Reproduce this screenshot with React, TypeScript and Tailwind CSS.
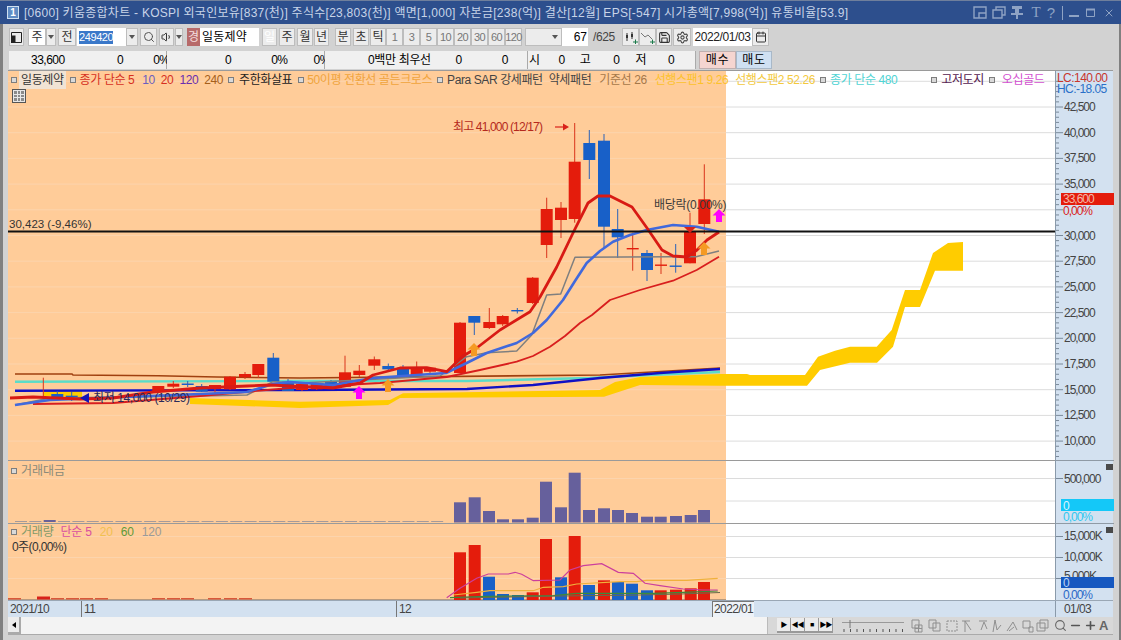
import React from "react";
import { Search, Volume1, Settings, Calendar, Save, Minus, Plus, X } from "lucide-react";

type Candle = [number, number, number, number, number, "r" | "b"];

// x, body top, body bottom, wick top, wick bottom
const candles: Candle[] = [
  [43.3, 397, 398, 377.7, 399, "r"],
  [57.3, 394, 398, 391, 399, "b"],
  [71.7, 395.7, 400, 392, 401, "b"],
  [158.3, 386, 391, 386, 392, "r"],
  [173.3, 383.7, 386.7, 381, 388, "r"],
  [187.7, 383.5, 385, 381, 387, "b"],
  [201.7, 386, 391.7, 384, 392, "b"],
  [215, 385, 389, 385, 394, "r"],
  [230, 376.7, 389.3, 376, 390, "r"],
  [245, 374, 377.3, 372, 379, "r"],
  [258.3, 364, 375, 364, 378, "r"],
  [273.3, 357.7, 381.7, 353, 382, "b"],
  [288, 381.7, 391, 379, 391, "b"],
  [302, 384, 390, 383, 391, "r"],
  [316.7, 384, 389.3, 383, 390, "r"],
  [331, 381.7, 386.7, 380, 388, "b"],
  [345, 372.3, 386.7, 355.7, 387, "r"],
  [359.3, 370.7, 375, 365, 377, "r"],
  [374.3, 359.3, 365.7, 356.5, 370, "r"],
  [388.3, 366, 369.3, 363.5, 370, "b"],
  [403, 367.7, 376, 365, 376, "b"],
  [416.7, 368, 375, 361.5, 375, "r"],
  [430, 367.7, 371.7, 367, 373, "r"],
  [460, 322.7, 373, 322, 373, "r"],
  [474.3, 316, 322.7, 316, 335, "b"],
  [489.3, 322, 328, 308, 329, "r"],
  [502.7, 316, 324.3, 315, 326, "r"],
  [517.3, 310, 311.4, 308, 313.5, "b"],
  [532.7, 277.7, 303, 277, 304, "r"],
  [546.7, 209, 245, 197.7, 258, "r"],
  [561, 207.7, 220, 202, 238, "r"],
  [574.7, 161.7, 219, 123, 222.7, "r"],
  [589.3, 143, 160, 130, 179, "b"],
  [604, 140.7, 226.7, 134, 248, "b"],
  [617.7, 229, 237.3, 209, 258, "b"],
  [632.7, 248, 249.4, 232.7, 270.7, "r"],
  [647, 253, 270, 250, 281, "b"],
  [661, 264.5, 265.9, 253, 274, "r"],
  [675.7, 265.5, 266.9, 244, 272.7, "b"],
  [690, 231.7, 263.3, 212.7, 263.3, "r"],
  [704.3, 199.3, 224, 164.3, 234, "r"],
];

const priceTicks = ["42,500", "40,000", "37,500", "35,000", "", "30,000", "27,500", "25,000", "22,500", "20,000", "17,500", "15,000", "12,500", "10,000"];
const priceY = (i: number) => 107 + i * 25.7;

const ma5 = "10,398 33,397 80,399 113,398 153,392 200,388 247,386 270,385 333,388 360,383 373,375 400,368 426.7,367.7 446.7,371.7 463,356 476.7,348 500,330 530,311.7 540,297 556.7,267 573,233 588,203 598,196 610,196 632,207 647,228 662,250 673,256 687,257 697,250 707,240 719,232";
const ma10 = "15,405 50,400 200,394 247,392 273,384 290,382 333,385 373,378 446,373 466.7,363 486.7,353 516.7,343 533,333 546.7,320 563,300 575,281 586.7,263 600,251 613,241.7 630,235 646.7,230 673,225 696.7,226.7 719,231.7";
const ma20 = "33,404 113,403 200,396 290,388 380,383 446.7,377 480,370 516.7,361.7 533,356 550,346.7 565,336 580,323 592,315 610,300 640,290 673,280.7 696.7,270 719,256.7";
const kijun = "15,405 50,398 200,396 247,395 273,381.7 300,383 440,376 466.7,356.7 486.7,352.7 516.7,351 531.7,335 546.7,295 560.7,294 575,257.3 673,256.7 696,256.7 719,251";
const ma240 = "15,374 72,374 73,375 158,375.7 217,377 300,378 600,375 720,368";
const ma480 = "15,381.7 300,381 467,381 590,378 650,375 720,372";
const ma120 = "15,390.7 300,390 467,389 533,385 600,378 660,373 720,369";
const cloud = "190,398 300,401.7 390,400 403,393.3 600,390 615,382 640,377 720,374 747,374 750,375 805,375 818,356.7 835,350.7 850,346.7 876.7,346.7 891.7,330 905,290 920,290 933,253 948,243 963,242 963,270.7 935,270.7 920,307 905,307 893,346.7 877,362.7 850,362.7 820,370 807,385.7 720,385.7 640,385 604,396.7 400,398 388,405 300,408 190,404";
const cloudLeft = "43,390 82,390 82,397 43,396";

const valueBars: [number, number][] = [
  [460, 502.3], [474.7, 497.3], [489, 511], [503, 519.3], [518, 519.3], [532.7, 517.7], [546, 481.7], [561, 507.3], [574.7, 472.7],
  [589, 510], [604, 508.3], [618, 510], [632, 513], [647, 516.7], [660.7, 516.7], [676, 516], [690.7, 515], [704, 510],
];
const volBars: [number, number, "r" | "b"][] = [
  [460, 552.3, "r"], [474.7, 545, "r"], [489, 576.7, "b"], [503, 594, "b"], [518, 595, "b"], [532.7, 592.3, "r"], [546, 539, "r"], [561, 577.3, "b"], [574.7, 536, "r"],
  [589, 585, "b"], [604, 580.3, "r"], [618, 582, "b"], [632, 583.7, "b"], [647, 590.3, "b"], [660.7, 590.3, "r"], [676, 589.7, "r"], [690.7, 588.3, "r"], [704, 582, "r"],
];

const volMa5 = [[80, 428], [120, 400], [170, 370], [205, 357], [265, 357], [285, 352], [305, 358], [340, 377], [420, 375], [450, 345], [490, 332], [545, 326], [595, 352], [640, 355], [675, 385], [720, 392], [790, 402], [850, 405], [893, 405]];
const volMa20 = [[100, 420], [170, 412], [210, 407], [340, 407], [370, 397], [430, 395], [470, 387], [600, 380], [650, 380], [680, 376], [800, 376], [893, 370]];
const volMa60 = [[90, 428], [200, 424], [400, 422], [470, 415], [700, 415], [790, 412], [893, 408]];
const volPts = (pts: number[][]) => pts.map(([x, y]) => `${(420 + x / 3).toFixed(1)},${(455 + y / 3).toFixed(1)}`).join(" ");

const Arrow = ({ x, y, up, color }: { x: number; y: number; up: boolean; color: string }) => (
  <polygon
    fill={color}
    points={up
      ? `${x},${y} ${x + 6.5},${y + 6.5} ${x + 3},${y + 6.5} ${x + 3},${y + 13} ${x - 3},${y + 13} ${x - 3},${y + 6.5} ${x - 6.5},${y + 6.5}`
      : `${x},${y} ${x + 6},${y - 6} ${x - 6},${y - 6}`}
  />
);

const Bullet = () => <span className="block w-[6px] h-[6px] border border-[#7d7d7d] bg-[#d9d9d9] shrink-0" />;

const Btn = ({ className = "", children }: { className?: string; children?: React.ReactNode }) => (
  <div className={`h-[18px] flex items-center justify-center bg-[#ececec] border border-[#bdbdbd] text-[#333] shrink-0 ${className}`}>
    {children}
  </div>
);

const Caret = () => <span className="w-0 h-0 border-x-[3px] border-x-transparent border-t-[4px] border-t-[#555]" />;

const MainChart = () => (
  <div className="relative h-[390px] shrink-0 bg-white border-b border-[#9a9a9a]">
    <div className="absolute left-0 top-0 bottom-0 w-[718px] bg-[#ffcc99]" />
    <svg className="absolute inset-0" width="1047" height="389" viewBox="8 71 1047 389">
      {[-1, 0, 1, 2, 3, 4, 5, 6, 7, 8, 9, 10, 11, 12, 13].map((i) => (
        <g key={i}>
          <line x1="8" x2="726" y1={priceY(i)} y2={priceY(i)} stroke="#fcd4ad" strokeWidth="1" />
          <line x1="726" x2="1055" y1={priceY(i)} y2={priceY(i)} stroke="#dcdcdc" strokeWidth="1" />
        </g>
      ))}
      <polygon points={cloud} fill="#ffcc00" />
      <polygon points={cloudLeft} fill="#ffcc00" />
      <polyline points={ma240} fill="none" stroke="#a0400f" strokeWidth="1.6" />
      <polyline points={ma480} fill="none" stroke="#5bdcc8" strokeWidth="2.4" />
      <polyline points={ma120} fill="none" stroke="#1111c4" strokeWidth="2.4" />
      {candles.map(([x, top, bottom, wt, wb, c]) => (
        <g key={x}>
          <line x1={x} x2={x} y1={wt} y2={wb} stroke={c === "r" ? "#d9341c" : "#2a62b8"} strokeWidth="1" />
          <rect x={x - 6} y={top} width="12" height={bottom - top} fill={c === "r" ? "#e41c0c" : "#1860c8"} />
        </g>
      ))}
      <polyline points={kijun} fill="none" stroke="#7f7f7f" strokeWidth="1.5" strokeLinejoin="round" />
      <polyline points={ma20} fill="none" stroke="#d81e1e" strokeWidth="1.8" strokeLinejoin="round" />
      <polyline points={ma10} fill="none" stroke="#4169dc" strokeWidth="2.6" strokeLinejoin="round" />
      <polyline points={ma5} fill="none" stroke="#d81a14" strokeWidth="2.8" strokeLinejoin="round" />
      <line x1="8" x2="1055" y1="231.5" y2="231.5" stroke="#111" strokeWidth="1.8" />
      <text x="9" y="228" fontSize="11.5" fill="#333">30,423 (-9,46%)</text>
      <text x="453" y="131" fontSize="12" fill="#b5291c" letterSpacing="-0.85">최고 41,000 (12/17)</text>
      <line x1="555" x2="566" y1="127" y2="127" stroke="#d8221a" strokeWidth="1.2" />
      <polygon points="569,127 563,123.5 563,130.5" fill="#d8221a" />
      <text x="654" y="209" fontSize="12" fill="#3a3a3a" letterSpacing="-0.3">배당락(0.00%)</text>
      <text x="93" y="402" fontSize="12" fill="#2a2a5a" letterSpacing="-0.4">최저 14,000 (10/29)</text>
      <polygon points="80,398 89,393 89,403" fill="#1414b8" />
      <Arrow x={690} y={233} up={false} color="#d8221a" />
      <Arrow x={719} y={209} up color="#ff00ff" />
      <Arrow x={704} y={242} up color="#f59a23" />
      <Arrow x={359} y={386} up color="#ff00ff" />
      <Arrow x={388} y={379} up color="#f59a23" />
      <Arrow x={474} y={343} up color="#f59a23" />
    </svg>
    {/* legend sits over the plot */}
    <div className="absolute left-0 top-[1px] flex items-center h-[15px] text-[12px] tracking-[-0.4px] whitespace-nowrap">
      <span className="ml-[3px]"><Bullet /></span>
      <span className="ml-[2px] px-[2px] bg-[#f1e3d4] text-[#333]">일동제약</span>
      <span className="ml-[4px]"><Bullet /></span>
      <span className="ml-[4px] text-[#d6301f]">종가 단순 5</span>
      <span className="ml-[8px] text-[#6a5fc0]">10</span>
      <span className="ml-[6px] text-[#d6301f]">20</span>
      <span className="ml-[6px] text-[#6a2fb0]">120</span>
      <span className="ml-[6px] text-[#a5601c]">240</span>
      <span className="ml-[5px]"><Bullet /></span>
      <span className="ml-[5px] text-[#222]">주한화살표</span>
      <span className="ml-[6px]"><Bullet /></span>
      <span className="ml-[3px] text-[#f0a43c]">50이평 전환선 골든크로스</span>
      <span className="ml-[5px]"><Bullet /></span>
      <span className="ml-[4px] text-[#444]">Para SAR 강세패턴</span>
      <span className="ml-[6px] text-[#444]">약세패턴</span>
      <span className="ml-[8px] text-[#a5784a]">기준선 26</span>
      <span className="ml-[8px] text-[#fcc22c]">선행스팬1 9.26</span>
      <span className="ml-[7px] text-[#f3c93c]">선행스팬2 52.26</span>
      <span className="ml-[5px]"><Bullet /></span>
      <span className="ml-[4px] text-[#4fd4d4]">종가 단순 480</span>
      <span className="ml-[34px]"><Bullet /></span>
      <span className="ml-[4px] text-[#55204f]">고저도지</span>
      <span className="ml-[5px]"><Bullet /></span>
      <span className="ml-[7px] text-[#d24fd0]">오십골드</span>
    </div>
    <div className="absolute left-[4px] top-[18px] w-[14px] h-[14px] bg-[#e7e7e7] border border-[#555] grid grid-cols-3 gap-px p-px">
      {Array.from({ length: 9 }).map((_, i) => <span key={i} className="bg-[#8a8a8a]" />)}
    </div>
  </div>
);

const ValueChart = () => (
  <div className="relative h-[63px] shrink-0 bg-white border-b border-[#9a9a9a]">
    <div className="absolute left-0 top-0 bottom-0 w-[718px] bg-[#ffcc99]" />
    <svg className="absolute inset-0" width="1047" height="62" viewBox="8 461 1047 62">
      <line x1="8" x2="726" y1="478.5" y2="478.5" stroke="#fcd4ad" />
      <line x1="726" x2="1055" y1="478.5" y2="478.5" stroke="#dcdcdc" />
      <line x1="726" x2="1055" y1="501" y2="501" stroke="#dcdcdc" />
      {Array.from({ length: 30 }).map((_, i) => (
        <rect key={i} x={15 + i * 14.35} y={i === 2 ? 520 : 521} width="12" height={i === 2 ? 2 : 1} fill={i === 2 ? "#6a6298" : "#a59a9a"} />
      ))}
      {valueBars.map(([x, top]) => <rect key={x} x={x - 6} y={top} width="12" height={522.5 - top} fill="#66609c" />)}
    </svg>
    <div className="absolute left-[3px] top-[1px] flex items-center gap-[4px] text-[12px] text-[#8a8a7a]">
      <Bullet />
      <span>거래대금</span>
    </div>
  </div>
);

const VolumeChart = () => (
  <div className="relative h-[76px] shrink-0 bg-white">
    <div className="absolute left-0 top-0 bottom-0 w-[718px] bg-[#ffcc99]" />
    <svg className="absolute inset-0" width="1047" height="76" viewBox="8 524 1047 76">
      {[536, 557, 578].map((y) => (
        <g key={y}>
          <line x1="8" x2="726" y1={y + 0.5} y2={y + 0.5} stroke="#fcd4ad" />
          <line x1="726" x2="1055" y1={y + 0.5} y2={y + 0.5} stroke="#dcdcdc" />
        </g>
      ))}
      <line x1="8" x2="726" y1="599.5" y2="599.5" stroke="#b89a7e" />
      {[8, 37, 51, 66, 80, 95, 152, 167, 181, 208, 224, 239].map((x, i) => (
        <rect key={x} x={x} y={i === 1 ? 596.5 : 598} width="13" height={i === 1 ? 3 : 1.5} fill={i === 1 ? "#d8221a" : "#d9583a"} />
      ))}
      {volBars.map(([x, top, c]) => <rect key={x} x={x - 6} y={top} width="12" height={600 - top} fill={c === "r" ? "#e41c0c" : "#1860c8"} />)}
      <polyline points={volPts(volMa20)} fill="none" stroke="#f0b13c" strokeWidth="1.2" />
      <polyline points={volPts(volMa60)} fill="none" stroke="#3b8a3b" strokeWidth="1.2" />
      <polyline points="720,592.5 680,594 640,595 560,596 460,598" fill="none" stroke="#6b6b4a" strokeWidth="1" />
      <polyline points={volPts(volMa5)} fill="none" stroke="#cc3f9c" strokeWidth="1.2" />
    </svg>
    <div className="absolute left-[3px] top-[1px] text-[12px] leading-[14px]">
      <div className="flex items-center gap-[4px] tracking-[-0.2px]">
        <Bullet />
        <span className="text-[#7f9a6a]">거래량</span>
        <span className="ml-[3px] text-[#d84fa0]">단순 5</span>
        <span className="ml-[4px] text-[#f0c050]">20</span>
        <span className="ml-[4px] text-[#5f9a3a]">60</span>
        <span className="ml-[4px] text-[#9a9a9a]">120</span>
      </div>
      <div className="ml-[1px] mt-[1px] text-[#333] tracking-[-0.6px]">0주(0,00%)</div>
    </div>
  </div>
);

const PriceAxis = () => (
  <div className="w-[58px] shrink-0 bg-[#d3e1f0] border-l border-[#8a9aaa]">
    <svg width="58" height="529" viewBox="1055 71 58 529" className="block">
      {Array.from({ length: 74 }).map((_, i) => {
        const y = 81.3 + i * 5.14;
        if (y > 460) return null;
        return <line key={i} x1="1055" x2={i % 5 === 0 ? 1062 : 1058} y1={y} y2={y} stroke="#7a8a9a" strokeWidth="1" />;
      })}
      {priceTicks.map((t, i) => (
        <text key={i} x="1063" y={priceY(i) + 4} fontSize="12" fill="#444" letterSpacing="-1">{t}</text>
      ))}
      <text x="1056" y="82" fontSize="12" fill="#c8362c" letterSpacing="-0.55">LC:140.00</text>
      <text x="1056" y="93" fontSize="12" fill="#2a70c8" letterSpacing="-0.55">HC:-18.05</text>
      <rect x="1060" y="193" width="53" height="12" fill="#e41c0c" />
      <text x="1062" y="203" fontSize="12" fill="#f5b8a8" letterSpacing="-1">33,600</text>
      <text x="1062" y="214.5" fontSize="12" fill="#d8221a" letterSpacing="-1">0,00%</text>

      <line x1="1055" x2="1113" y1="460.5" y2="460.5" stroke="#8f9aa5" />
      <line x1="1055" x2="1062" y1="478.5" y2="478.5" stroke="#7a8a9a" />
      <text x="1063" y="482.5" fontSize="12" fill="#444" letterSpacing="-1">500,000</text>
      <rect x="1060" y="499" width="53" height="12" fill="#14c8f8" />
      <text x="1062" y="509.5" fontSize="12" fill="#d8f4ff">0</text>
      <text x="1062" y="521" fontSize="12" fill="#30c8f0" letterSpacing="-1">0,00%</text>
      <rect x="1105" y="464" width="7" height="6" fill="#4a4a4a" />

      <line x1="1055" x2="1113" y1="523.5" y2="523.5" stroke="#8f9aa5" />
      <rect x="1105" y="527" width="7" height="6" fill="#4a4a4a" />
      {[536, 557, 578].map((y) => <line key={y} x1="1055" x2="1062" y1={y + 0.5} y2={y + 0.5} stroke="#7a8a9a" />)}
      <text x="1063" y="540" fontSize="12" fill="#444" letterSpacing="-1">15,000K</text>
      <text x="1063" y="561" fontSize="12" fill="#444" letterSpacing="-1">10,000K</text>
      <text x="1063" y="580" fontSize="12" fill="#444" letterSpacing="-1">5,000K</text>
      <rect x="1060" y="577" width="53" height="11" fill="#1658c0" />
      <text x="1062" y="587" fontSize="12" fill="#bcd4f4">0</text>
      <text x="1062" y="598.5" fontSize="12" fill="#2a68c8" letterSpacing="-1">0,00%</text>
    </svg>
  </div>
);

const RestoreIcon = ({ flip = false }: { flip?: boolean }) => (
  <svg width="14" height="13" fill="none" stroke="#8fa3c4" strokeWidth="1.4" className="shrink-0">
    {flip ? (
      <path d="M4 4V1h9v8h-3M1 4h9v8H1z" />
    ) : (
      <path d="M1 1h12v11H1zM6 12V7h7" />
    )}
  </svg>
);

const App = () => {
  return (
    <div className="w-[1121px] h-[640px] overflow-hidden flex flex-col bg-[#d2d2d2] font-['Liberation_Sans','Noto_Sans_CJK_KR',sans-serif] text-[12px]">
      {/* title bar */}
      <div className="h-[24px] shrink-0 bg-[#2d4f8d] border-t border-[#6f7f9c] flex items-center pl-[7px] text-[#c8d4e8]">
        <div className="w-[12px] h-[13px] border border-[#cfe0f0] bg-[#5f8cc4] text-white text-[10px] leading-[11px] text-center font-bold">1</div>
        <div className="ml-[5px] tracking-[0.27px] whitespace-nowrap">[0600] 키움종합차트 - KOSPI 외국인보유[837(천)] 주식수[23,803(천)] 액면[1,000] 자본금[238(억)] 결산[12월] EPS[-547] 시가총액[7,998(억)] 유통비율[53.9]</div>
        <div className="ml-auto mr-[6px] flex items-center text-[#8fa3c4]">
          <RestoreIcon />
          <span className="ml-[5px]"><RestoreIcon flip /></span>
          <svg width="12" height="13" fill="#8fa3c4" className="ml-[5px] shrink-0">
            <path d="M1 0h10v3H8v4h4v2H7v4H5V9H0V7h4V3H1z" />
          </svg>
          <span className="ml-[8px] text-[15px] leading-[15px] font-['Liberation_Serif',serif]">T</span>
          <span className="ml-[6px] text-[15px] leading-[15px]">?</span>
          <span className="ml-[7px] w-px h-[14px] bg-[#8fa3c4]" />
          <svg width="10" height="13" className="ml-[6px] shrink-0"><rect x="0" y="9" width="10" height="2" fill="#8fa3c4" /></svg>
          <svg width="9" height="13" fill="none" stroke="#8fa3c4" className="ml-[7px] shrink-0"><path d="M.5 3.5h8v7h-8z" /><path d="M0 3.5h9" strokeWidth="2" /></svg>
          <X size={12} className="ml-[8px]" />
        </div>
      </div>

      <div className="flex-1 flex flex-col min-h-0 border-l-[3px] border-l-[#808080] border-r-[2px] border-r-[#808080] pl-[5px] pr-[6px]">
        {/* toolbar 1 */}
        <div className="h-[26px] shrink-0 pt-[4px] flex items-start whitespace-nowrap">
          <Btn className="w-[15px] ml-[1px]">
            <svg width="11" height="11" fill="none" stroke="#222"><path d="M.5.5h10v10H.5z" /><rect x="0" y="4" width="4" height="7" fill="#222" /></svg>
          </Btn>
          <Btn className="w-[18px] ml-[4px] bg-white">주</Btn>
          <Btn className="w-[10px]"><Caret /></Btn>
          <Btn className="w-[18px] ml-[2px]">전</Btn>
          <div className="w-[49px] h-[18px] ml-[1px] bg-white flex items-center pl-[2px] shrink-0">
            <span className="bg-[#3a78c9] text-white text-[11px] tracking-[-0.4px] leading-[13px]">249420</span>
          </div>
          <Btn className="w-[12px]"><Caret /></Btn>
          <Btn className="w-[17px] ml-[2px]"><Search size={12} className="text-[#555]" /></Btn>
          <Btn className="w-[15px] ml-[2px]"><Volume1 size={12} className="text-[#333]" /></Btn>
          <Btn className="w-[8px] ml-[1px]"><Caret /></Btn>
          <div className="w-[13px] h-[18px] ml-[4px] bg-[#b76a6a] text-[#f3dcdc] flex items-center justify-center shrink-0">경</div>
          <div className="w-[59px] h-[18px] bg-white pl-[2px] flex items-center shrink-0 tracking-[0.02em]">일동제약</div>
          <Btn className="w-[15px] ml-[3px] bg-[#3d7cc9] text-white">일</Btn>
          <Btn className="w-[16px] ml-[2px]">주</Btn>
          <Btn className="w-[16px] ml-[2px]">월</Btn>
          <Btn className="w-[15px] ml-[1px]">년</Btn>
          <Btn className="w-[16px] ml-[6px]">분</Btn>
          <Btn className="w-[16px] ml-[2px]">초</Btn>
          <Btn className="w-[16px] ml-[1px]">틱</Btn>
          {["1", "3", "5", "10", "20", "30", "60", "120"].map((n) => (
            <Btn key={n} className="w-[17px] text-[#777] text-[11px] tracking-[-0.6px]">{n}</Btn>
          ))}
          <Btn className="w-[37px] ml-[3px] justify-end pr-[3px] bg-[#e0e0e0]"><Caret /></Btn>
          <div className="w-[26px] h-[18px] bg-white text-right pr-[1px] leading-[18px] shrink-0">67</div>
          <span className="ml-[5px] w-[29px] leading-[18px] text-[#444] tracking-[-0.4px] shrink-0">/625</span>
          <Btn className="w-[17px]">
            <svg width="14" height="13" fill="#333" stroke="#333">
              <path d="M3 2v8M8 1v7" fill="none" />
              <rect x="2" y="4" width="2" height="3" stroke="none" />
              <rect x="7" y="3" width="2" height="3" stroke="none" />
              <path d="M9 11h5M11.5 8.5v5" fill="none" stroke="#1b7a4a" />
            </svg>
          </Btn>
          <Btn className="w-[17px]">
            <svg width="14" height="13" fill="none" stroke="#777">
              <path d="M0 2l4 4 3-2 4 4" />
              <path d="M9 11h5M11.5 8.5v5" stroke="#1b7a4a" />
            </svg>
          </Btn>
          <Btn className="w-[16px]"><Save size={13} /></Btn>
          <Btn className="w-[18px] ml-px"><Settings size={13} className="text-[#444]" /></Btn>
          <div className="w-[59px] h-[18px] ml-[2px] bg-white leading-[18px] text-center tracking-[-0.4px] text-[#222] shrink-0">2022/01/03</div>
          <Btn className="w-[17px]"><Calendar size={12} /></Btn>
        </div>
        {/* toolbar 2 */}
        <div className="h-[20px] shrink-0 flex items-center whitespace-nowrap tracking-[-0.5px]">
          <div className="w-[158px] h-[18px] ml-[1px] bg-[#f0f0f0] border-r border-[#aaa] flex items-center shrink-0">
            <span className="ml-[22px] w-[32px]">33,600</span>
            <span className="ml-[54px]">0</span>
            <span className="ml-[30px]">0%</span>
          </div>
          <div className="w-[158px] h-[18px] bg-[#f0f0f0] border-r border-[#aaa] flex items-center shrink-0">
            <span className="ml-[58px]">0</span>
            <span className="ml-[40px]">0%</span>
            <span className="ml-[26px]">0%</span>
          </div>
          <div className="w-[203px] h-[18px] bg-[#f0f0f0] border-r border-[#aaa] flex items-center shrink-0">
            <span className="ml-[43px] tracking-[-0.3px]">0백만</span>
            <span className="ml-[3px]">최우선</span>
            <span className="ml-[25px]">0</span>
            <span className="ml-[40px]">0</span>
          </div>
          <div className="w-[168px] h-[18px] bg-[#f0f0f0] border-r border-[#aaa] flex items-center shrink-0">
            <span className="ml-[1px]">시</span>
            <span className="ml-[19px]">0</span>
            <span className="ml-[15px]">고</span>
            <span className="ml-[23px]">0</span>
            <span className="ml-[16px]">저</span>
            <span className="ml-[22px]">0</span>
          </div>
          <div className="w-[37px] h-[18px] ml-[3px] bg-[#f5d5d0] border border-[#c0b0b0] text-center leading-[16px] tracking-[0.05em] shrink-0">매수</div>
          <div className="w-[36px] h-[18px] bg-[#cfe0f2] border border-[#a8b8c8] text-center leading-[16px] tracking-[0.05em] shrink-0">매도</div>
        </div>

        {/* chart */}
        <div className="h-[530px] shrink-0 flex border-t border-[#9a9a9a]">
          <div className="flex-1 flex flex-col min-w-0">
            <MainChart />
            <ValueChart />
            <VolumeChart />
          </div>
          <PriceAxis />
        </div>

        {/* date axis */}
        <div className="h-[17px] shrink-0 bg-[#d3e1f0] border-t border-[#9aa7b5] flex items-center relative whitespace-nowrap text-[#444] tracking-[-0.6px]">
          <span className="ml-[2px] w-[71px]">2021/10</span>
          <span className="border-l border-[#777] pl-[2px] w-[315px] h-full leading-[16px]">11</span>
          <span className="border-l border-[#777] pl-[2px] h-full leading-[16px]">12</span>
          <span className="absolute left-[704px] top-0 h-full px-px bg-[#edf2f8] border-l border-t border-[#777] leading-[15px]">2022/01</span>
          <span className="absolute left-[1047px] top-0 h-full w-[58px] border-l border-[#8a9aaa] pl-[8px] leading-[16px]">01/03</span>
        </div>

        {/* scroll and tools */}
        <div className="h-[17px] shrink-0 flex items-center bg-[#d8d8d8]">
          <div className="w-[13px] h-[17px] bg-[#ececec] border-r-2 border-b-2 border-[#aaa] flex items-center justify-center shrink-0">
            <span className="w-0 h-0 border-y-[3px] border-y-transparent border-r-[4px] border-r-black" />
          </div>
          <div className="w-[747px] h-full bg-[#f3f3f3] border-r border-[#bbb] shrink-0" />
          <div className="ml-[9px] flex items-center shrink-0">
            {["▶", "◀◀", "■", "▶▶"].map((g) => (
              <span key={g} className="w-[14px] h-[15px] bg-[#ececec] border-b-2 border-r border-[#999] text-[7px] leading-[13px] text-center text-black tracking-[-1px]">{g}</span>
            ))}
          </div>
          <svg width="62" height="14" className="ml-[9px] shrink-0">
            <line x1="0" x2="62" y1="3.5" y2="3.5" stroke="#999" />
            <line x1="8" x2="8" y1="1" y2="9" stroke="#777" />
            {Array.from({ length: 10 }).map((_, i) => <line key={i} x1={2 + i * 6.5} x2={2 + i * 6.5} y1="10" y2="13" stroke="#555" />)}
          </svg>
          <div className="ml-[5px] flex items-center text-[#8a8a8a] shrink-0">
            <svg width="142" height="15" fill="none" stroke="#8f8f8f" className="shrink-0">
              <path d="M3 2h7v8H3zM6 7h7v7H6zM9.500 7v7M6 10.500h7" />
              <path d="M20 2h7v8h-7zM24 5h7v8h-7z" />
              <path d="M38 3h10v10H38z" strokeDasharray="2 1" />
              <path d="M56 14V3M53 3h8M56 3l6 9" />
              <path d="M70 3h8M72 12l3-8 3 7" />
              <path d="M84 14l2-12 2 10 4-5" />
              <path d="M98 13l6-9 4 8M100 13l5-4" />
              <path d="M114 3h7v7h-7zM120 9h4v5h-4z" />
              <path d="M128 5h8v8h-8zM131 2h8v8h-8z" />
            </svg>
            <Search size={13} className="ml-[3px] text-[#666]" />
            <Minus size={13} strokeWidth={3} className="ml-[2px] text-[#555]" />
            <Plus size={13} strokeWidth={3} className="ml-[2px] text-[#555]" />
            <span className="ml-[2px] font-bold text-[13px] text-[#666]">A</span>
          </div>
        </div>
        <div className="flex-1 border-t border-[#aaa]" />
      </div>
    </div>
  );
};

export default App;
